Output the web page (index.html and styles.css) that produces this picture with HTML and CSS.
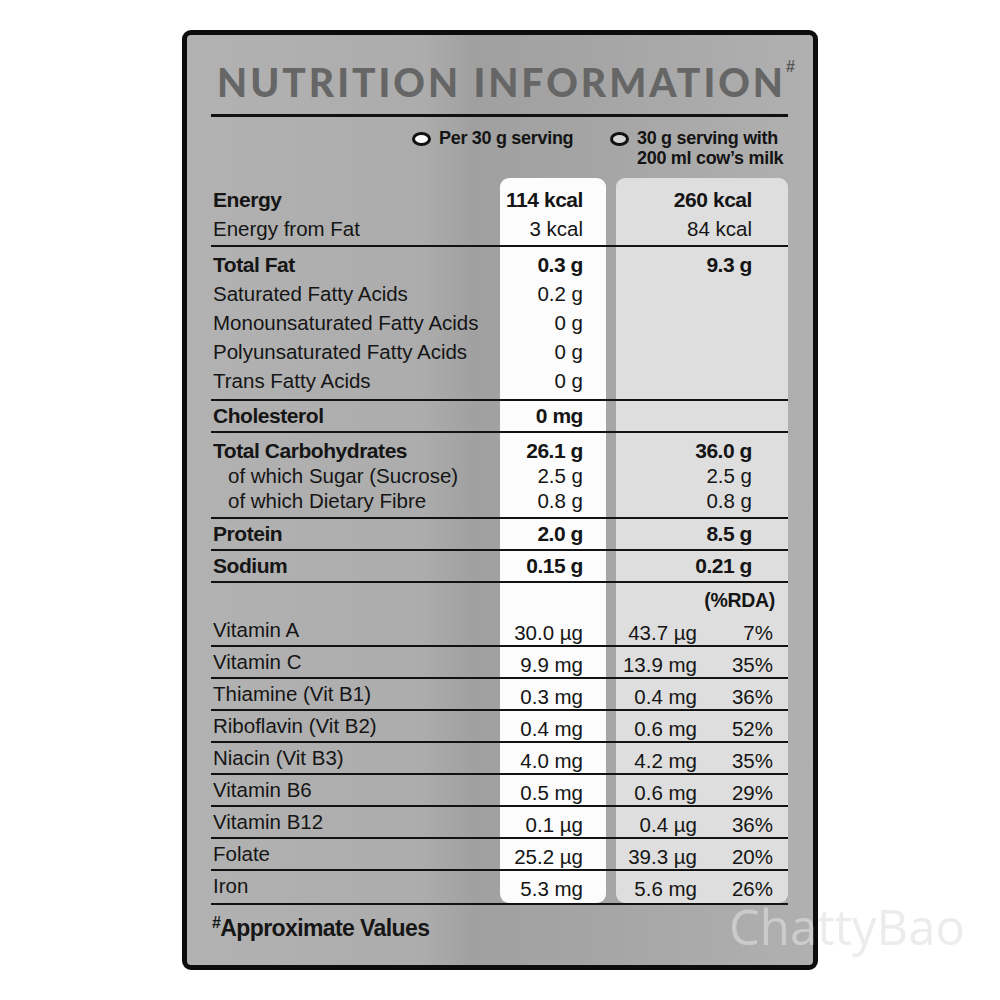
FILE: index.html
```html
<!DOCTYPE html>
<html lang="en">
<head>
<meta charset="utf-8">
<title>Nutrition Information</title>
<link rel="stylesheet" href="styles.css">
</head>
<body>
<div class="panel">
  <h1 class="title">NUTRITION INFORMATION<sup class="hash">#</sup></h1>
  <div class="legend">
    <div class="leg leg-first"><span class="dot"></span><span>Per 30 g serving</span></div>
    <div class="leg"><span class="dot dot-grey"></span><span>30 g serving with<br>200 ml cow’s milk</span></div>
  </div>

  <div class="table">
    <div class="row r-energy top">
      <div class="lbl"><div class="b">Energy</div><div>Energy from Fat</div></div>
      <div class="c1"><div class="b">114 kcal</div><div>3 kcal</div></div>
      <div class="c2"><div class="b">260 kcal</div><div>84 kcal</div></div>
    </div>
    <div class="row r-fat">
      <div class="lbl"><div class="b">Total Fat</div><div>Saturated Fatty Acids</div><div>Monounsaturated Fatty Acids</div><div>Polyunsaturated Fatty Acids</div><div>Trans Fatty Acids</div></div>
      <div class="c1"><div class="b">0.3 g</div><div>0.2 g</div><div>0 g</div><div>0 g</div><div>0 g</div></div>
      <div class="c2"><div class="b">9.3 g</div></div>
    </div>
    <div class="row r-single">
      <div class="lbl"><div class="b">Cholesterol</div></div>
      <div class="c1"><div class="b">0 mg</div></div>
      <div class="c2"></div>
    </div>
    <div class="row r-carb">
      <div class="lbl"><div class="b">Total Carbohydrates</div><div class="ind">of which Sugar (Sucrose)</div><div class="ind">of which Dietary Fibre</div></div>
      <div class="c1"><div class="b">26.1 g</div><div>2.5 g</div><div>0.8 g</div></div>
      <div class="c2"><div class="b">36.0 g</div><div>2.5 g</div><div>0.8 g</div></div>
    </div>
    <div class="row r-single">
      <div class="lbl"><div class="b">Protein</div></div>
      <div class="c1"><div class="b">2.0 g</div></div>
      <div class="c2"><div class="b">8.5 g</div></div>
    </div>
    <div class="row r-single">
      <div class="lbl"><div class="b">Sodium</div></div>
      <div class="c1"><div class="b">0.15 g</div></div>
      <div class="c2"><div class="b">0.21 g</div></div>
    </div>
    <div class="row r-rda">
      <div class="lbl"></div>
      <div class="c1"></div>
      <div class="c2"><div class="rda">(%RDA)</div></div>
    </div>
    <div class="row r-vit r-vit-first">
      <div class="lbl">Vitamin A</div>
      <div class="c1 v">30.0 µg</div>
      <div class="c2 v"><span class="amt">43.7 µg</span><span class="pct">7%</span></div>
    </div>
    <div class="row r-vit">
      <div class="lbl">Vitamin C</div>
      <div class="c1 v">9.9 mg</div>
      <div class="c2 v"><span class="amt">13.9 mg</span><span class="pct">35%</span></div>
    </div>
    <div class="row r-vit">
      <div class="lbl">Thiamine (Vit B1)</div>
      <div class="c1 v">0.3 mg</div>
      <div class="c2 v"><span class="amt">0.4 mg</span><span class="pct">36%</span></div>
    </div>
    <div class="row r-vit">
      <div class="lbl">Riboflavin (Vit B2)</div>
      <div class="c1 v">0.4 mg</div>
      <div class="c2 v"><span class="amt">0.6 mg</span><span class="pct">52%</span></div>
    </div>
    <div class="row r-vit">
      <div class="lbl">Niacin (Vit B3)</div>
      <div class="c1 v">4.0 mg</div>
      <div class="c2 v"><span class="amt">4.2 mg</span><span class="pct">35%</span></div>
    </div>
    <div class="row r-vit">
      <div class="lbl">Vitamin B6</div>
      <div class="c1 v">0.5 mg</div>
      <div class="c2 v"><span class="amt">0.6 mg</span><span class="pct">29%</span></div>
    </div>
    <div class="row r-vit">
      <div class="lbl">Vitamin B12</div>
      <div class="c1 v">0.1 µg</div>
      <div class="c2 v"><span class="amt">0.4 µg</span><span class="pct">36%</span></div>
    </div>
    <div class="row r-vit">
      <div class="lbl">Folate</div>
      <div class="c1 v">25.2 µg</div>
      <div class="c2 v"><span class="amt">39.3 µg</span><span class="pct">20%</span></div>
    </div>
    <div class="row r-vit last">
      <div class="lbl">Iron</div>
      <div class="c1 v">5.3 mg</div>
      <div class="c2 v"><span class="amt">5.6 mg</span><span class="pct">26%</span></div>
    </div>
  </div>

  <div class="foot"><sup class="foot-hash">#</sup>Approximate Values</div>
</div>
<div class="watermark">ChattyBao</div>
</body>
</html>
```

FILE: styles.css
```css
html, body {
  margin: 0;
  padding: 0;
  background: #ffffff;
}

body {
  position: relative;
  width: 1000px;
  height: 1000px;
  overflow: hidden;
  font-family: "Liberation Sans", Arial, sans-serif;
  color: #151515;
}

.panel {
  box-sizing: border-box;
  width: 636px;
  height: 940px;
  margin: 30px 0 0 182px;
  border: 5px solid #0d0d0d;
  border-radius: 9px;
  padding: 0 25px 0 24px;
  background: linear-gradient(90deg, #b2b2b2 0%, #acacac 38%, #a0a0a0 46%, #a4a4a4 62%, #b0b0b0 100%);
}

.title {
  margin: 27px 0 0 0;
  padding: 0 0 12px 6px;
  border-bottom: 3px solid #111;
  font-family: "Lato", "Liberation Sans", sans-serif;
  font-weight: 900;
  font-size: 39px;
  line-height: 40px;
  letter-spacing: 3px;
  color: #666666;
  white-space: nowrap;
}

.hash {
  font-size: 16px;
  line-height: 0;
  vertical-align: 25px;
  letter-spacing: 0;
  margin-left: 0;
  color: #5a5a5a;
  font-family: "Liberation Sans", sans-serif;
  font-weight: 700;
}

.legend {
  display: flex;
  margin-top: 11px;
  padding-left: 201px;
  font-weight: 700;
  font-size: 18px;
  line-height: 20px;
  letter-spacing: -0.3px;
  color: #141414;
}

.leg {
  display: flex;
  align-items: flex-start;
}

.leg-first {
  width: 198px;
}

.dot {
  box-sizing: border-box;
  flex: none;
  width: 19px;
  height: 14px;
  margin: 4px 8px 0 0;
  border: 3px solid #111;
  border-radius: 50%;
  background: #fdfdfd;
}

.dot-grey {
  background: #d4d4d4;
}

.table {
  margin-top: 10px;
}

.row {
  display: grid;
  grid-template-columns: 279px 106px 172px;
  column-gap: 10px;
  border-bottom: 2px solid #121212;
  font-size: 20.5px;
}

.lbl {
  padding-left: 2px;
  white-space: nowrap;
}

.c1 {
  background: #fcfcfc;
  text-align: right;
  padding-right: 23px;
  white-space: nowrap;
}

.c2 {
  background: #dedede;
  text-align: right;
  padding-right: 36px;
  white-space: nowrap;
}

.b {
  font-weight: 700;
  font-size: 21px;
  letter-spacing: -0.45px;
}

.ind {
  padding-left: 15px;
}

.top .c1,
.top .c2 {
  border-radius: 9px 9px 0 0;
}

.last .c1,
.last .c2 {
  border-radius: 0 0 9px 9px;
}

.r-energy > div {
  padding-top: 7px;
  padding-bottom: 2px;
  line-height: 29px;
}

.r-fat > div {
  padding-top: 3px;
  padding-bottom: 4px;
  line-height: 29px;
}

.r-single > div {
  line-height: 30px;
}

.r-carb > div {
  padding-top: 5px;
  padding-bottom: 4px;
  line-height: 25px;
}

.r-rda {
  border-bottom: none;
}

.r-rda > div {
  padding-top: 4px;
  line-height: 26px;
}

.r-rda > .c2 {
  padding-right: 13px;
}

.rda {
  font-weight: 700;
  font-size: 19.5px;
  letter-spacing: -0.3px;
}

.r-vit > .lbl {
  line-height: 30px;
}

.r-vit > .v {
  padding-top: 5px;
  line-height: 25px;
}

.r-vit-first > .lbl {
  padding-top: 2px;
}

.r-vit-first > .v {
  padding-top: 7px;
}

.last > .lbl {
  padding-bottom: 2px;
}

.r-vit > .c2 {
  display: flex;
  padding-right: 15px;
}

.amt {
  width: 81px;
  text-align: right;
}

.pct {
  flex: 1;
  text-align: right;
}

.foot {
  margin-top: 8px;
  padding-left: 1px;
  font-weight: 700;
  font-size: 23px;
  line-height: 30px;
  letter-spacing: -0.6px;
  color: #161616;
}

.foot-hash {
  font-size: 16px;
  line-height: 0;
  vertical-align: 8px;
  margin-right: 0;
}

.watermark {
  position: absolute;
  left: 729px;
  top: 906px;
  font-family: "Open Sans", sans-serif;
  font-weight: 400;
  font-size: 49px;
  line-height: 40px;
  color: rgba(224, 224, 224, 0.6);
  white-space: nowrap;
  pointer-events: none;
}
```
